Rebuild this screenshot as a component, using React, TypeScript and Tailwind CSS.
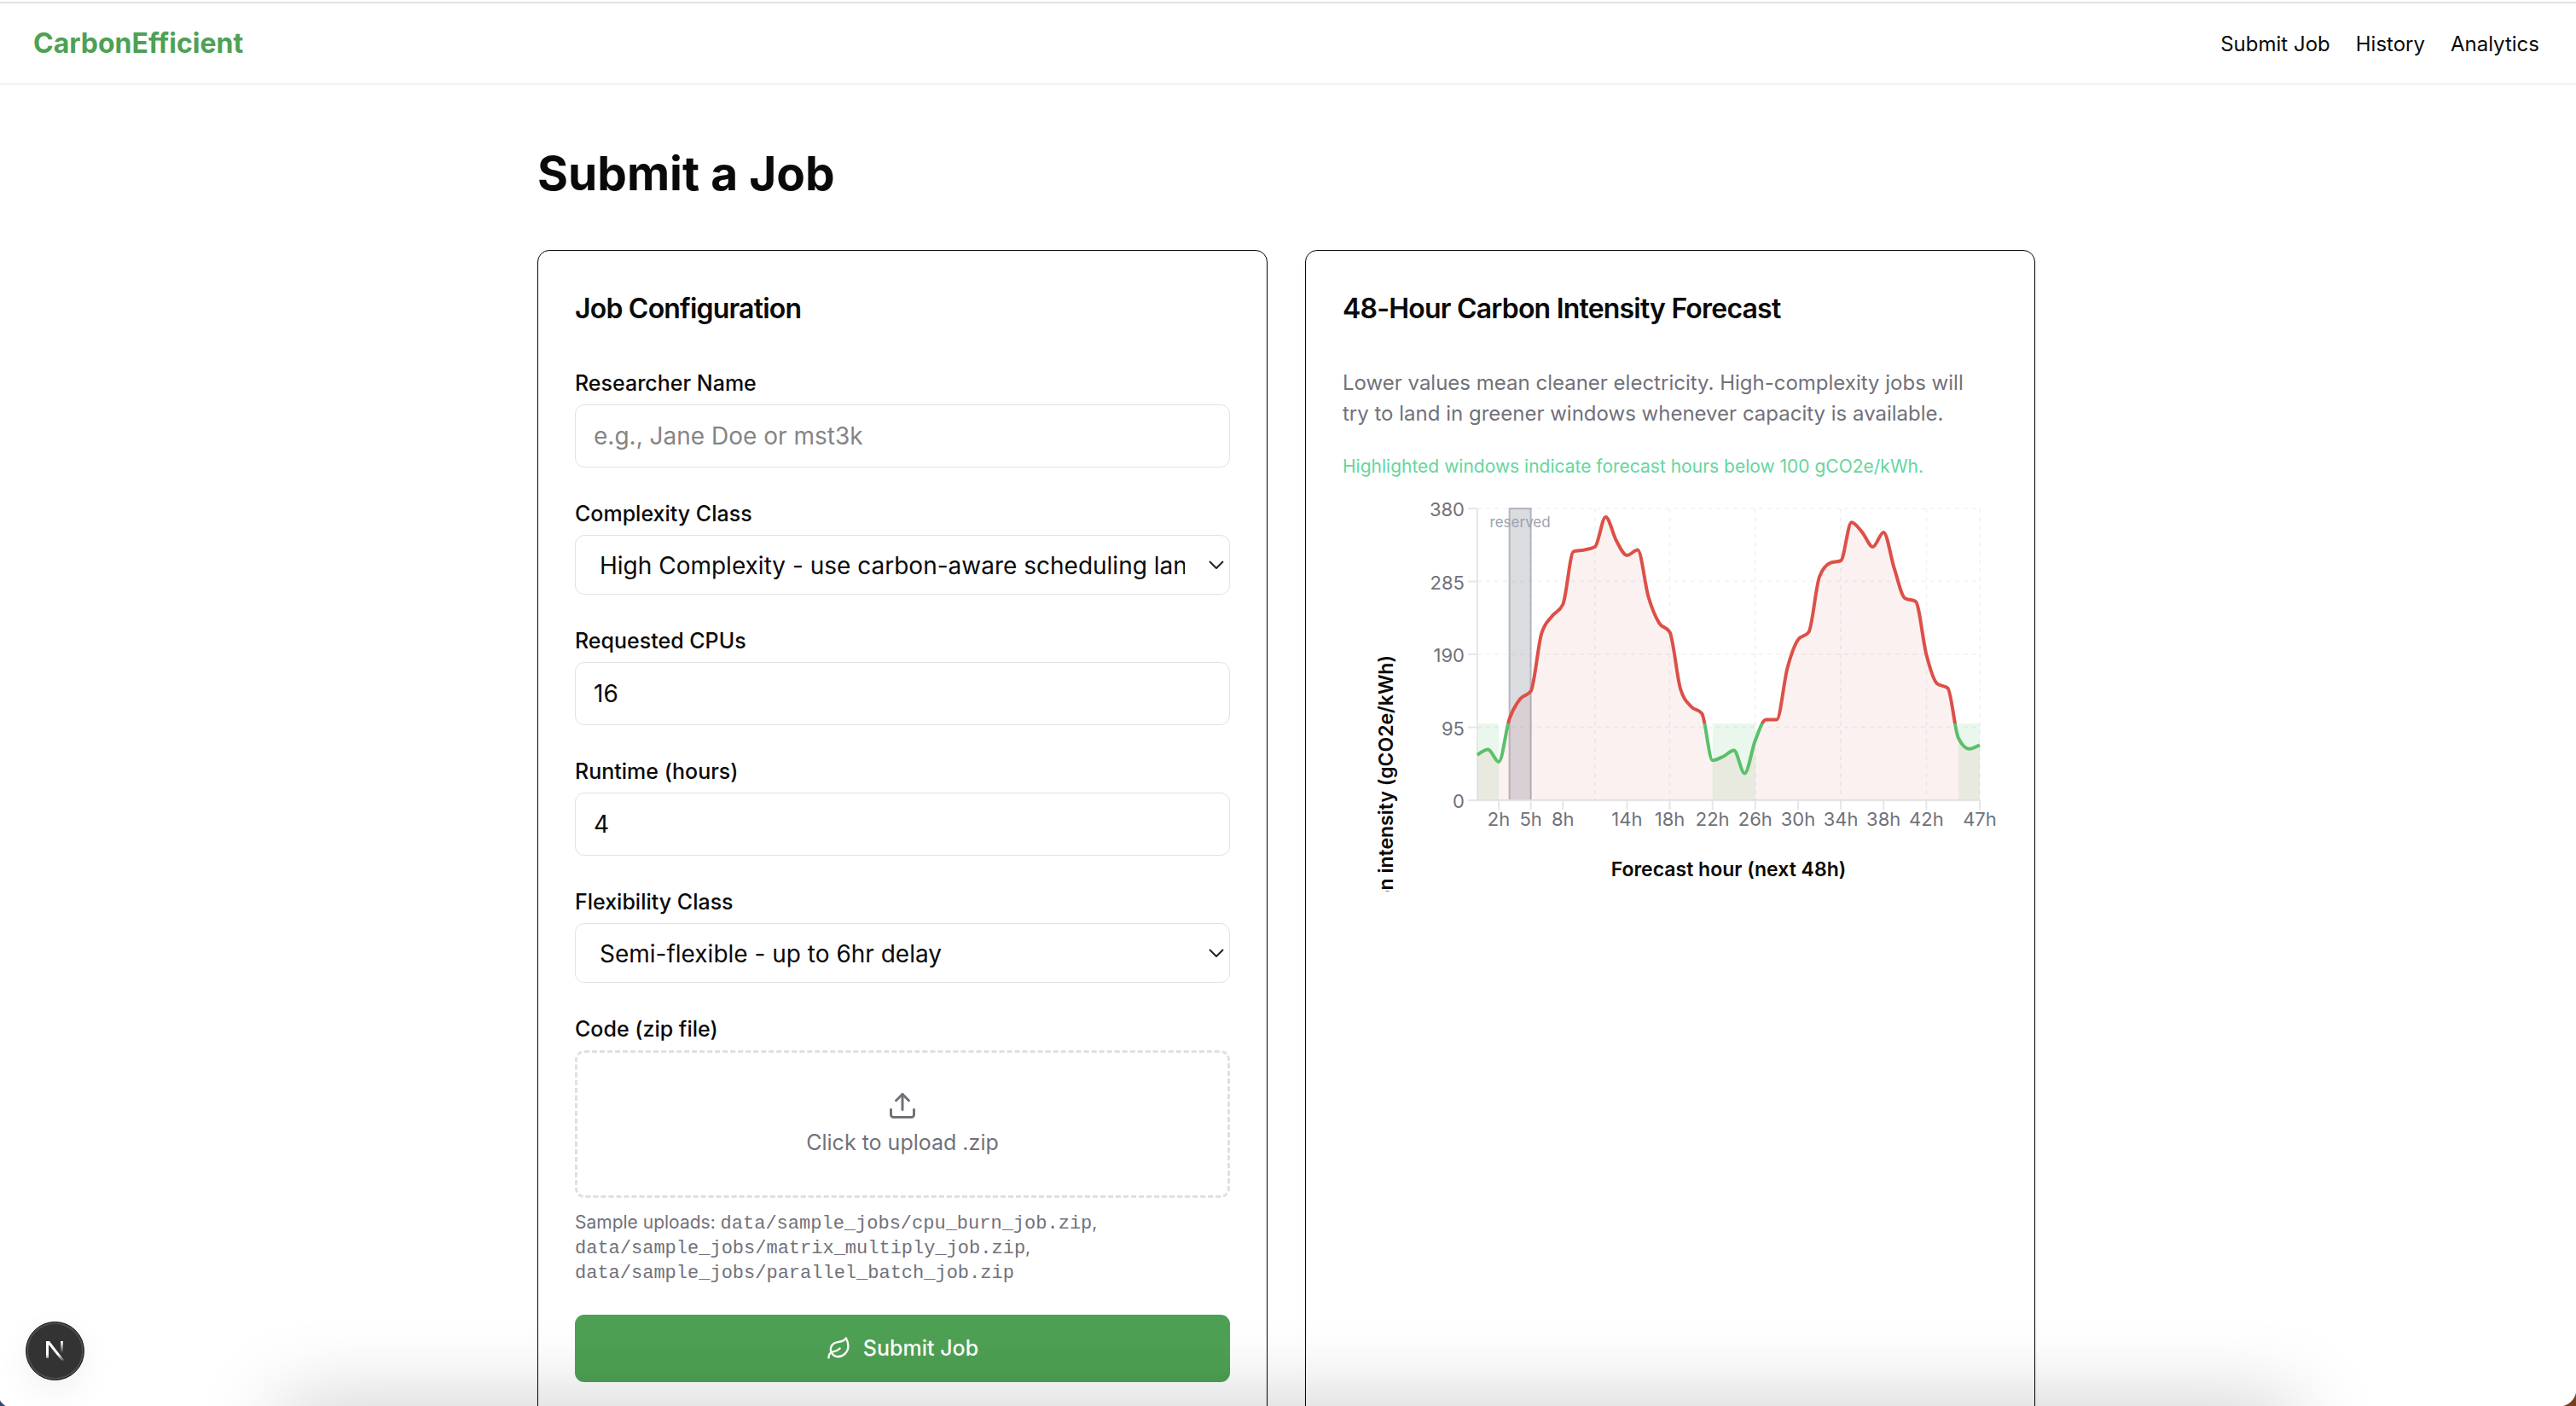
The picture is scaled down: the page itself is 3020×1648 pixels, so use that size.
import { useState } from "react";
import { Leaf, Upload } from "lucide-react";

const navLinks = ["Submit Job", "History", "Analytics"];

const sampleJobs = [
  "data/sample_jobs/cpu_burn_job.zip",
  "data/sample_jobs/matrix_multiply_job.zip",
  "data/sample_jobs/parallel_batch_job.zip",
];

// gCO2e/kWh per hour, next 48h
const forecast = [
  59, 66, 50, 106, 132, 142, 217, 240, 255, 324, 326, 330, 369, 338, 319, 326,
  265, 231, 219, 145, 122, 113, 52, 57, 65, 35, 78, 105, 105, 172, 209, 219,
  291, 309, 312, 362, 349, 330, 349, 302, 263, 259, 190, 152, 146, 81, 67, 72,
];

const THRESHOLD = 100;
const MAX_VALUE = 380;
const plot = { left: 158, right: 747, top: 19, bottom: 361 };

const greenWindows = [
  [0, 2],
  [22, 26],
  [45, 47],
];
const xTicks = [2, 5, 8, 14, 18, 22, 26, 30, 34, 38, 42, 47];
const xGrid = [5, 11, 18, 26, 34, 42, 47];
const yTicks = [0, 95, 190, 285, 380];

const xAt = (hour: number) =>
  plot.left + (hour / 47) * (plot.right - plot.left);
const yAt = (value: number) =>
  plot.bottom - (value / MAX_VALUE) * (plot.bottom - plot.top);

// Monotone cubic interpolation, so the curve never overshoots a data point
const buildCurve = (values: number[]) => {
  const points = values.map((v, i) => [xAt(i), yAt(v)]);
  const step = points[1][0] - points[0][0];
  const slopes = points
    .slice(1)
    .map((p, i) => (p[1] - points[i][1]) / step);
  const tangents = points.map((_, i) => {
    if (i === 0 || i === points.length - 1) return 0;
    const a = slopes[i - 1];
    const b = slopes[i];
    return (
      (Math.sign(a) + Math.sign(b)) *
      Math.min(Math.abs(a), Math.abs(b), Math.abs(a + b) / 4)
    );
  });
  const last = points.length - 1;
  tangents[0] = (3 * slopes[0] - tangents[1]) / 2;
  tangents[last] = (3 * slopes[last - 1] - tangents[last - 1]) / 2;

  let d = `M${points[0][0]},${points[0][1]}`;
  for (let i = 1; i < points.length; i++) {
    const [x0, y0] = points[i - 1];
    const [x1, y1] = points[i];
    d += `C${x0 + step / 3},${y0 + (tangents[i - 1] * step) / 3} ${
      x1 - step / 3
    },${y1 - (tangents[i] * step) / 3} ${x1},${y1}`;
  }
  return d;
};

const ForecastChart = () => {
  const line = buildCurve(forecast);
  const area = `${line}L${plot.right},${plot.bottom}L${plot.left},${plot.bottom}Z`;
  const split = (yAt(THRESHOLD) - plot.top) / (plot.bottom - plot.top);

  return (
    <svg
      viewBox="0 0 768 468"
      className="mt-4 block w-full"
      role="img"
      aria-label="48-hour carbon intensity forecast"
    >
      <defs>
        <linearGradient
          id="line-color"
          gradientUnits="userSpaceOnUse"
          x1="0"
          x2="0"
          y1={plot.top}
          y2={plot.bottom}
        >
          <stop offset={split} stopColor="#dc5048" />
          <stop offset={split} stopColor="#5bc06a" />
        </linearGradient>
      </defs>

      <g stroke="#f4f4f5" strokeWidth="2" strokeDasharray="5 5">
        {yTicks.slice(1).map((v) => (
          <line key={v} x1={plot.left} x2={plot.right} y1={yAt(v)} y2={yAt(v)} />
        ))}
        {xGrid.map((h) => (
          <line key={h} x1={xAt(h)} x2={xAt(h)} y1={plot.top} y2={plot.bottom} />
        ))}
      </g>

      {greenWindows.map(([from, to]) => (
        <rect
          key={from}
          x={xAt(from)}
          y={yAt(THRESHOLD)}
          width={xAt(to) - xAt(from)}
          height={plot.bottom - yAt(THRESHOLD)}
          fill="#5bc06a"
          fillOpacity="0.13"
        />
      ))}
      <rect
        x={xAt(3)}
        y={plot.top}
        width={xAt(5) - xAt(3)}
        height={plot.bottom - plot.top}
        fill="#9297a3"
        fillOpacity="0.34"
        stroke="#8f94a0"
        strokeOpacity="0.6"
        strokeWidth="2"
      />

      <g stroke="#e6e6e8" strokeWidth="2">
        <line x1={plot.left} x2={plot.left} y1={plot.top} y2={plot.bottom} />
        <line x1={plot.left} x2={plot.right} y1={plot.bottom} y2={plot.bottom} />
        {yTicks.map((v) => (
          <line
            key={v}
            x1={plot.left - 11}
            x2={plot.left}
            y1={yAt(v)}
            y2={yAt(v)}
          />
        ))}
        {xTicks.map((h) => (
          <line
            key={h}
            x1={xAt(h)}
            x2={xAt(h)}
            y1={plot.bottom}
            y2={plot.bottom + 11}
          />
        ))}
      </g>

      <path d={area} fill="#dc5048" fillOpacity="0.08" />
      <path d={line} fill="none" stroke="url(#line-color)" strokeWidth="4" />

      <text
        x={xAt(4)}
        y="41"
        textAnchor="middle"
        fontSize="17"
        fill="#9ca3af"
      >
        reserved
      </text>

      <g fontSize="22" fill="#71717a">
        {yTicks.map((v) => (
          <text key={v} x={plot.left - 15} y={yAt(v) + 9} textAnchor="end">
            {v}
          </text>
        ))}
        {xTicks.map((h) => (
          <text key={h} x={xAt(h)} y="391" textAnchor="middle">
            {h}h
          </text>
        ))}
      </g>

      <g fontSize="23" fontWeight="600" fill="#0a0a0a">
        <text x={xAt(23.5)} y="450" textAnchor="middle">
          Forecast hour (next 48h)
        </text>
        <text transform="translate(59 191) rotate(-90)" textAnchor="end">
          Carbon intensity (gCO2e/kWh)
        </text>
      </g>
    </svg>
  );
};

const SelectField = ({
  id,
  label,
  options,
}: {
  id: string;
  label: string;
  options: string[];
}) => (
  <div className="flex flex-col gap-[7px]">
    <label htmlFor={id} className="text-[25px] leading-9 font-medium">
      {label}
    </label>
    <div className="relative">
      <select
        id={id}
        className="block h-[70px] w-full appearance-none rounded-[11px] border border-[#e2e2e4] bg-white pt-[2px] pr-[52px] pl-[28px] text-[28px] outline-none focus:border-[#4ea154]"
      >
        {options.map((option) => (
          <option key={option}>{option}</option>
        ))}
      </select>
      <svg
        viewBox="0 0 18 10"
        className="pointer-events-none absolute top-1/2 right-[7px] h-[10px] w-[18px] -translate-y-1/2"
        fill="none"
        stroke="#222"
        strokeWidth="2"
      >
        <path d="M1 1l8 8 8-8" />
      </svg>
    </div>
  </div>
);

const inputClass =
  "h-[74px] w-full rounded-[11px] border border-[#e2e2e4] bg-white px-[21px] text-[28px] outline-none placeholder:text-[#858585] focus:border-[#4ea154]";

const JobForm = () => {
  const [form, setForm] = useState({ name: "", cpus: "16", runtime: "4" });
  const [fileName, setFileName] = useState("");

  const handleChange = (e: React.ChangeEvent<HTMLInputElement>) => {
    setForm((prev) => ({ ...prev, [e.target.name]: e.target.value }));
  };

  return (
    <form className="flex flex-col gap-9" onSubmit={(e) => e.preventDefault()}>
      <div className="flex flex-col gap-[7px]">
        <label htmlFor="name" className="text-[25px] leading-9 font-medium">
          Researcher Name
        </label>
        <input
          id="name"
          name="name"
          type="text"
          placeholder="e.g., Jane Doe or mst3k"
          value={form.name}
          onChange={handleChange}
          className={inputClass}
        />
      </div>
      <SelectField
        id="complexity"
        label="Complexity Class"
        options={[
          "High Complexity - use carbon-aware scheduling lanes",
          "Low Complexity - run as soon as possible",
        ]}
      />
      <div className="flex flex-col gap-[7px]">
        <label htmlFor="cpus" className="text-[25px] leading-9 font-medium">
          Requested CPUs
        </label>
        <input
          id="cpus"
          name="cpus"
          type="number"
          value={form.cpus}
          onChange={handleChange}
          className={inputClass}
        />
      </div>
      <div className="flex flex-col gap-[7px]">
        <label htmlFor="runtime" className="text-[25px] leading-9 font-medium">
          Runtime (hours)
        </label>
        <input
          id="runtime"
          name="runtime"
          type="number"
          value={form.runtime}
          onChange={handleChange}
          className={inputClass}
        />
      </div>
      <SelectField
        id="flexibility"
        label="Flexibility Class"
        options={["Semi-flexible - up to 6hr delay", "Flexible - up to 24hr delay"]}
      />
      <div>
        <label htmlFor="code" className="block text-[25px] leading-9 font-medium">
          Code (zip file)
        </label>
        <label
          htmlFor="code"
          className="mt-[7px] flex cursor-pointer flex-col items-center gap-[7px] rounded-[11px] border-3 border-dashed border-[#e0e0e2] py-11 text-[25px] leading-9 text-[#71717a]"
        >
          <Upload className="size-9" />
          <span>{fileName || "Click to upload .zip"}</span>
        </label>
        <input
          id="code"
          type="file"
          accept=".zip"
          className="sr-only"
          onChange={(e) => setFileName(e.target.files?.[0]?.name ?? "")}
        />
        <p className="mt-[14px] text-[21px] leading-[29px] text-[#71717a]">
          Sample uploads:{" "}
          {sampleJobs.map((job, i) => (
            <span key={job}>
              <code className="font-['Liberation_Mono',monospace] text-[22px] leading-none">
                {job}
              </code>
              {i < sampleJobs.length - 1 && ", "}
            </span>
          ))}
        </p>
      </div>
      <button
        type="submit"
        className="flex h-[79px] items-center justify-center gap-[14px] rounded-[11px] bg-[#4ea154] text-[25px] font-medium text-white hover:bg-green-700"
      >
        <Leaf className="size-[29px]" />
        Submit Job
      </button>
    </form>
  );
};

const Card = ({
  title,
  children,
}: {
  title: string;
  children: React.ReactNode;
}) => (
  <section className="min-w-0 rounded-[14px] border border-[#0a0a0a] bg-white px-[43px] py-11 shadow-sm">
    <h2 className="mb-[45px] text-[32px] leading-[48px] font-semibold tracking-tight">
      {title}
    </h2>
    {children}
  </section>
);

const DevBadge = () => (
  <button
    type="button"
    aria-label="Open dev tools"
    className="fixed bottom-[30px] left-[30px] flex size-[69px] items-center justify-center rounded-full border border-[#171717] bg-[#333] shadow-[inset_0_0_0_2px_#4d4d4d,0_14px_40px_rgba(0,0,0,0.06)]"
  >
    <svg viewBox="0 0 22 26" className="h-[26px] w-[22px]" fill="none">
      <defs>
        <linearGradient id="n-diagonal" x1="0" y1="0" x2="0" y2="1">
          <stop offset="0.65" stopColor="#fff" />
          <stop offset="1" stopColor="#fff" stopOpacity="0" />
        </linearGradient>
        <linearGradient id="n-stem" x1="0" y1="0" x2="0" y2="1">
          <stop offset="0" stopColor="#fff" />
          <stop offset="1" stopColor="#fff" stopOpacity="0" />
        </linearGradient>
      </defs>
      <path d="M0 1h4l17 22-2 2L3 5v16H0z" fill="url(#n-diagonal)" />
      <path d="M17 1h3v14h-3z" fill="url(#n-stem)" />
    </svg>
  </button>
);

const App = () => {
  return (
    <div className="h-screen overflow-hidden bg-white pr-1 font-['Inter',sans-serif] text-[#0a0a0a]">
      <header className="-mr-1 mt-[2px] flex h-[97px] items-center justify-between border-t-2 border-b border-[#e2e2e2] pr-[43px] pl-[39px]">
        <a href="#" className="text-[32px] font-bold text-[#4ea154]">
          CarbonEfficient
        </a>
        <nav className="flex gap-[30px] pt-[2px] text-[24px]">
          {navLinks.map((link) => (
            <a key={link} href="#" className="hover:text-[#4ea154]">
              {link}
            </a>
          ))}
        </nav>
      </header>

      <main className="mx-auto max-w-[1756px] pt-[72px] pb-[72px]">
        <h1 className="mb-[57px] text-[55px] leading-[65px] font-bold">
          Submit a Job
        </h1>
        <div className="grid grid-cols-2 gap-11">
          <Card title="Job Configuration">
            <JobForm />
          </Card>
          <Card title="48-Hour Carbon Intensity Forecast">
            <p className="pr-5 text-[24px] leading-9 text-[#71717a]">
              Lower values mean cleaner electricity. High-complexity jobs will
              try to land in greener windows whenever capacity is available.
            </p>
            <p className="mt-[29px] text-[21px] leading-[29px] text-[#65d69d]">
              Highlighted windows indicate forecast hours below 100 gCO2e/kWh.
            </p>
            <ForecastChart />
          </Card>
        </div>
      </main>

      <DevBadge />
      <div className="pointer-events-none fixed inset-x-[330px] top-full h-20 shadow-[0_0_100px_rgba(0,0,0,0.22)]" />
      <div className="pointer-events-none fixed bottom-0 left-0 size-4 bg-[radial-gradient(circle_at_100%_0,transparent_18px,#2f4a78_19px)]" />
      <div className="pointer-events-none fixed right-0 bottom-0 size-5 bg-[radial-gradient(circle_at_0_0,transparent_20px,#7a3e1f_21px)]" />
    </div>
  );
};

export default App;
